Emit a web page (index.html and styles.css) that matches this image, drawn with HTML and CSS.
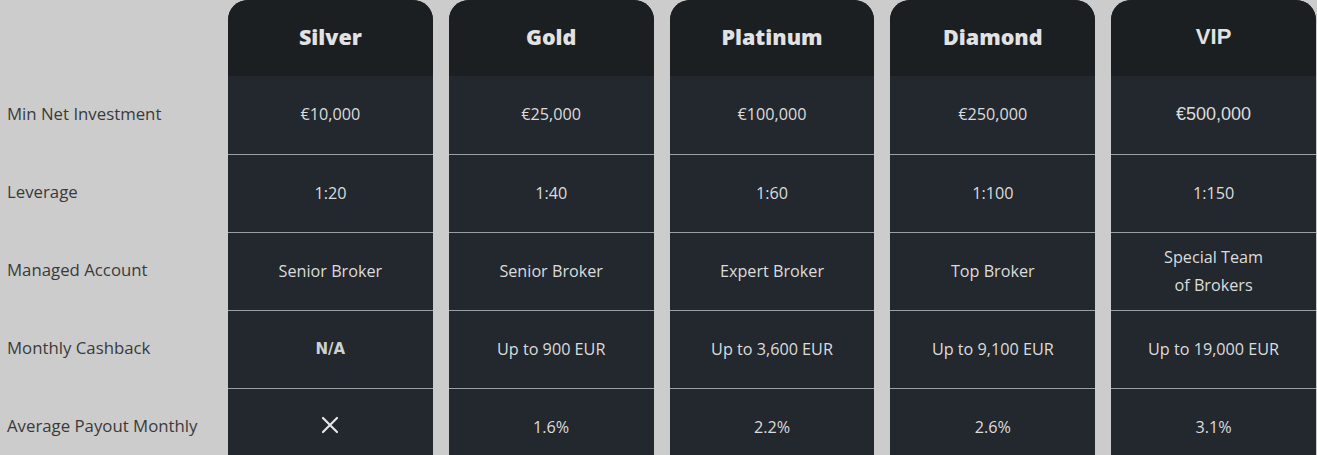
FILE: index.html
```html
<!DOCTYPE html>
<html lang="en">
<head>
<meta charset="utf-8">
<title>Account Tiers</title>
<link rel="stylesheet" href="styles.css">
</head>
<body>
<div class="tiers">
  <div class="labels">
    <div class="label-head"></div>
    <div class="label">Min Net Investment</div>
    <div class="label">Leverage</div>
    <div class="label">Managed Account</div>
    <div class="label">Monthly Cashback</div>
    <div class="label">Average Payout Monthly</div>
  </div>

  <div class="card">
    <div class="card-head">Silver</div>
    <div class="cell">€10,000</div>
    <div class="cell">1:20</div>
    <div class="cell">Senior Broker</div>
    <div class="cell cell-na">N/A</div>
    <div class="cell">
      <svg class="cross" width="18" height="18" viewBox="0 0 18 18" aria-label="No">
        <path d="M2 2 L16 16 M16 2 L2 16" stroke="#e6e6e6" stroke-width="2.2" stroke-linecap="round" fill="none"/>
      </svg>
    </div>
  </div>

  <div class="card">
    <div class="card-head">Gold</div>
    <div class="cell">€25,000</div>
    <div class="cell">1:40</div>
    <div class="cell">Senior Broker</div>
    <div class="cell">Up to 900 EUR</div>
    <div class="cell">1.6%</div>
  </div>

  <div class="card">
    <div class="card-head">Platinum</div>
    <div class="cell">€100,000</div>
    <div class="cell">1:60</div>
    <div class="cell">Expert Broker</div>
    <div class="cell">Up to 3,600 EUR</div>
    <div class="cell">2.2%</div>
  </div>

  <div class="card">
    <div class="card-head">Diamond</div>
    <div class="cell">€250,000</div>
    <div class="cell">1:100</div>
    <div class="cell">Top Broker</div>
    <div class="cell">Up to 9,100 EUR</div>
    <div class="cell">2.6%</div>
  </div>

  <div class="card">
    <div class="card-head card-head-alt">VIP</div>
    <div class="cell cell-alt">€500,000</div>
    <div class="cell">1:150</div>
    <div class="cell cell-two">Special Team<br>of Brokers</div>
    <div class="cell">Up to 19,000 EUR</div>
    <div class="cell">3.1%</div>
  </div>
</div>
</body>
</html>
```

FILE: styles.css
```css
html {
  overflow: hidden;
}

body {
  margin: 0;
  background: #cccccc;
  font-family: "Open Sans", "Liberation Sans", sans-serif;
}

.tiers {
  display: flex;
  gap: 16px;
  width: 1316px;
}

.labels {
  flex: 0 0 212px;
  box-sizing: border-box;
  padding-left: 7px;
  display: flex;
  flex-direction: column;
}

.label-head {
  height: 76px;
}

.label {
  height: 78px;
  box-sizing: border-box;
  padding-bottom: 3px;
  display: flex;
  align-items: center;
  font-size: 16.8px;
  color: #3a3a3a;
  white-space: nowrap;
}

.card {
  flex: 1 1 0;
  display: flex;
  flex-direction: column;
  background: #23282f;
  border-radius: 20px 20px 0 0;
  overflow: hidden;
}

.card-head {
  height: 76px;
  background: #1b1f22;
  color: #e2e2e2;
  display: flex;
  align-items: center;
  justify-content: center;
  font-size: 21.5px;
  font-weight: 800;
  padding-bottom: 4px;
  box-sizing: border-box;
}

.card-head-alt {
  font-family: "Liberation Sans", Arial, sans-serif;
  font-weight: 700;
  font-size: 22px;
  padding-bottom: 2px;
}

.cell {
  height: 78px;
  flex: 0 0 78px;
  display: flex;
  align-items: center;
  justify-content: center;
  text-align: center;
  color: #dcdcdc;
  font-size: 16.2px;
  font-weight: 500;
  box-sizing: border-box;
  padding-bottom: 2px;
}

.cell + .cell {
  border-top: 1px solid #9aa0a4;
}

.cell-alt {
  font-family: "Liberation Sans", Arial, sans-serif;
  font-size: 18px;
  font-weight: 400;
}

.cell-na {
  font-family: "DejaVu Sans", sans-serif;
  font-weight: 700;
  font-size: 15px;
  color: #d0d0d0;
}

.cell-two {
  line-height: 28px;
}

.cross {
  display: block;
  margin-bottom: 4px;
}
```
